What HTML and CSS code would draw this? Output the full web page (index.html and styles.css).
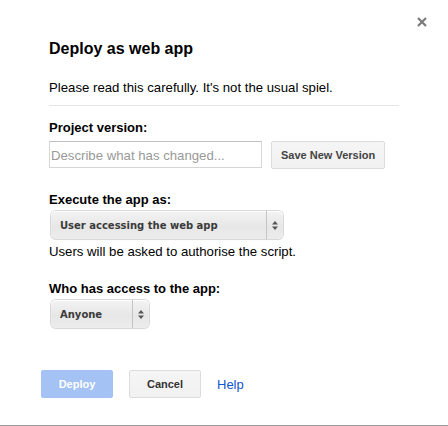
FILE: index.html
```html
<!DOCTYPE html>
<html>
<head>
<meta charset="utf-8">
<link rel="stylesheet" href="styles.css">
</head>
<body>
<div class="dialog">
  <span class="close" aria-label="Close">
    <svg width="10" height="10" viewBox="0 0 10 10"><path d="M1 1L9 9M9 1L1 9" stroke="#7a7a7a" stroke-width="2.2" stroke-linecap="butt"/></svg>
  </span>
  <div class="content">
    <h1 class="title">Deploy as web app</h1>
    <p class="intro">Please read this carefully. It's not the usual spiel.</p>
    <div class="section first">
      <div class="label">Project version:</div>
      <div class="row">
        <input class="text-input" type="text" placeholder="Describe what has changed...">
        <button class="btn">Save New Version</button>
      </div>
    </div>
    <div class="section second">
      <div class="label">Execute the app as:</div>
      <div class="select wide"><span class="sel-text">User accessing the web app</span><span class="sel-arrow"><svg width="6" height="9" viewBox="0 0 6 9"><path d="M3 0L6 3.5H0Z M3 9L6 5.5H0Z" fill="#555"/></svg></span></div>
      <p class="note">Users will be asked to authorise the script.</p>
    </div>
    <div class="section third">
      <div class="label">Who has access to the app:</div>
      <div class="select narrow"><span class="sel-text">Anyone</span><span class="sel-arrow"><svg width="6" height="9" viewBox="0 0 6 9"><path d="M3 0L6 3.5H0Z M3 9L6 5.5H0Z" fill="#555"/></svg></span></div>
    </div>
  </div>
  <div class="footer">
    <button class="btn primary">Deploy</button>
    <button class="btn cancel">Cancel</button>
    <a class="help" href="#">Help</a>
  </div>
</div>
</body>
</html>
```
FILE: styles.css
```css
html, body {
  margin: 0;
  padding: 0;
  background: #fff;
}
body {
  font-family: "Liberation Sans", Arial, sans-serif;
  color: #000;
  font-size: 13.2px;
}
.dialog {
  position: relative;
  width: 448px;
  height: 425px;
  border-bottom: 1px solid #9a9a9a;
  box-sizing: content-box;
}
.close {
  position: absolute;
  top: 17px;
  left: 417px;
  width: 10px;
  height: 10px;
  line-height: 0;
}
.content {
  padding: 39px 49px 0 49px;
}
.title {
  margin: 0;
  font-size: 16px;
  line-height: 20px;
  font-weight: bold;
}
.intro {
  margin: 21px 0 0 0;
  line-height: 16px;
  padding-bottom: 9px;
  border-bottom: 1px solid #e5e5e5;
  width: 350px;
}
.section.first {
  margin-top: 14px;
}
.section.second {
  margin-top: 23px;
}
.section.third {
  margin-top: 21px;
}
.label {
  font-weight: bold;
  font-size: 13px;
  line-height: 16px;
}
.row {
  display: flex;
  align-items: flex-start;
  gap: 9px;
  margin-top: 5px;
}
.text-input {
  box-sizing: border-box;
  width: 213px;
  height: 27px;
  margin: 0;
  padding: 1px 1px 0 1px;
  border: 1px solid #d6d6d6;
  border-top-color: #c0c0c0;
  font-family: "Liberation Sans", Arial, sans-serif;
  font-size: 13.2px;
  outline: none;
}
.text-input::placeholder {
  color: #999;
}
.btn {
  box-sizing: border-box;
  height: 28px;
  margin: 0;
  padding: 0 9px;
  border: 1px solid #dcdcdc;
  border-radius: 2px;
  background: linear-gradient(#f5f5f5, #f1f1f1);
  color: #444;
  font-family: "Liberation Sans", Arial, sans-serif;
  font-size: 11px;
  font-weight: bold;
}
.select {
  box-sizing: border-box;
  display: flex;
  align-items: stretch;
  height: 28px;
  margin: 3px 0 0 2px;
  border-radius: 5px;
  background: linear-gradient(#f3f3f3, #e7e7e7 55%, #ececec);
  box-shadow: 0 0 0 1px #d8d8d8, 0 1px 1px rgba(0,0,0,0.08), inset 0 1px 1px #fff;
  font-family: "DejaVu Sans", Verdana, sans-serif;
  font-size: 10px;
  font-weight: bold;
  color: #3a3a3a;
}
.select.wide {
  width: 232px;
}
.select.narrow {
  width: 98px;
}
.sel-text {
  flex: 1;
  display: flex;
  align-items: center;
  padding-left: 9px;
  border-right: 1px solid #c4c4c4;
}
.sel-arrow {
  width: 16px;
  display: flex;
  align-items: center;
  justify-content: center;
}
.note {
  margin: 5px 0 0 0;
  line-height: 16px;
}
.footer {
  display: flex;
  align-items: center;
  margin-top: 42px;
  padding-left: 41px;
  gap: 16px;
}
.btn.primary {
  width: 72px;
  background: #a4c2f4;
  border-color: #a4c2f4;
  color: #fff;
  border-radius: 2px;
}
.btn.cancel {
  width: 72px;
  color: #333;
}
.help {
  color: #1155cc;
  text-decoration: none;
  font-size: 13px;
}
```
